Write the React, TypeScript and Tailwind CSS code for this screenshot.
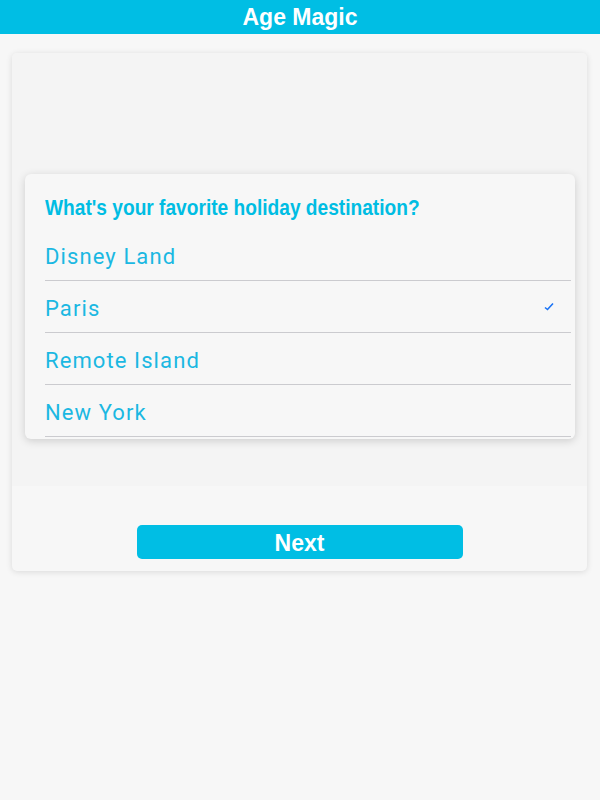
import React, { useState } from 'react';

const options = ['Disney Land', 'Paris', 'Remote Island', 'New York'];

const App = () => {
  const [selected, setSelected] = useState('Paris');

  return (
    <div className="min-h-[800px] bg-[#f7f7f7] font-['Liberation_Sans',Arial,sans-serif]">
      <div className="flex h-[34px] items-center justify-center bg-[#00bee4]">
        <h1 className="text-[23px] font-bold leading-none text-white">Age Magic</h1>
      </div>

      <div className="mx-[12px] mt-[19px] w-[575px] overflow-hidden rounded-[5px] bg-[#f7f7f7] shadow-[0_1px_6px_rgba(0,0,0,0.12)]">
        <div className="bg-[#f4f4f4] pb-[47px] pl-[13px] pr-[12px] pt-[121px]">
          <div className="rounded-[6px] bg-[#f7f7f7] pb-[2px] shadow-[0_2px_8px_rgba(0,0,0,0.16)]">
            <div className="px-[20px] pt-[22px]">
              <div className="origin-left scale-x-[0.87] whitespace-nowrap text-[22px] font-bold leading-[24px] text-[#00bde3]">
                What's your favorite holiday destination?
              </div>
            </div>
            <div className="mt-[9px]">
              {options.map((opt) => (
                <div
                  key={opt}
                  onClick={() => setSelected(opt)}
                  className="ml-[20px] mr-[4px] flex h-[52px] cursor-pointer items-center justify-between border-b border-[#cbcbcf] pr-[17px] pt-[3px]"
                >
                  <span className="font-['Roboto',sans-serif] text-[22px] tracking-[1.1px] text-[#1bb8e2]">{opt}</span>
                  {selected === opt && (
                    <svg width="10" height="9" viewBox="0 0 10 9" fill="none" className="-mt-[3px]">
                      <path d="M1 5.5 L3.5 7.5 L9 1.5" stroke="#1a73f5" strokeWidth="1.6" />
                    </svg>
                  )}
                </div>
              ))}
            </div>
          </div>
        </div>
        <div className="flex justify-center pb-[12px] pt-[39px]">
          <button className="h-[34px] w-[326px] rounded-[5px] bg-[#00bee4] pt-[2px] text-[23px] font-bold leading-none text-white">
            Next
          </button>
        </div>
      </div>
    </div>
  );
};

export default App;
